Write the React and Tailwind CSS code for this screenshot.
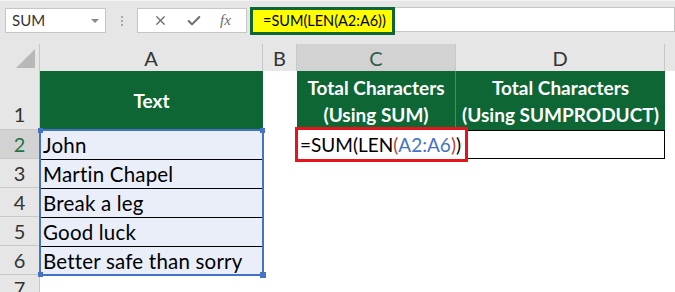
import React from "react";
import { X, Check } from "lucide-react";

const font = { fontFamily: "Lato, 'Open Sans', sans-serif" };

const rows = ["John", "Martin Chapel", "Break a leg", "Good luck", "Better safe than sorry"];

function RowHead({ n, active }) {
  return (
    <div
      className={`flex items-center justify-center border-b border-r border-[#c8c8c8] text-[20px] leading-none ${
        active ? "bg-[#d2d2d2] text-[#217346]" : "bg-[#e6e6e6] text-[#333]"
      }`}
    >
      {n}
    </div>
  );
}

export default function App() {
  return (
    <div className="w-[675px] h-[292px] overflow-hidden bg-white text-black" style={font}>
      {/* FORMULA BAR */}
      <div className="h-[44px] bg-[#e6e6e6] border-t border-[#f3f3f3] flex items-start pt-[7px] pl-[5px]">
        <div className="w-[101px] h-[25px] bg-white border border-[#c6c6c6] flex items-center justify-between pl-[6px] pr-[6px] text-[15px] text-[#333]">
          <span>SUM</span>
          <span className="w-0 h-0 border-l-[4px] border-r-[4px] border-t-[4px] border-l-transparent border-r-transparent border-t-[#8a8a8a]" />
        </div>
        <div className="w-[31px] h-[25px] flex flex-col items-center justify-center gap-[2px]">
          <span className="w-[2px] h-[2px] bg-[#a8a8a8]" />
          <span className="w-[2px] h-[2px] bg-[#a8a8a8]" />
          <span className="w-[2px] h-[2px] bg-[#a8a8a8]" />
        </div>
        <div className="w-[110px] h-[25px] bg-white border border-[#c6c6c6] flex items-center justify-around px-[6px]">
          <X size={15} strokeWidth={2} className="text-[#6b6b6b]" />
          <Check size={16} strokeWidth={3} className="text-[#6b6b6b]" />
          <span className="text-[15px] italic text-[#6b6b6b]" style={{ fontFamily: "'Liberation Serif', serif" }}>
            fx
          </span>
        </div>
        <div className="w-[3px]" />
        <div className="flex-1 h-[25px] bg-white border border-[#c6c6c6] flex items-start -mt-[1px]">
          <div className="h-[28px] -mt-[1px] -ml-[1px] w-[145px] bg-[#ffff00] border-[3px] border-[#0d6634] flex items-center pl-[10px] text-[14.5px]">
            =SUM(LEN(A2:A6))
          </div>
        </div>
      </div>

      {/* SHEET */}
      <div className="grid grid-cols-[40px_223px_34px_159px_209px_1fr] grid-rows-[27px_59px_29px_29px_29px_29px_29px_1fr] h-[248px] leading-none">
        {/* column headers */}
        <div className="bg-[#e6e6e6] border-r border-[#c8c8c8] flex items-end justify-end pr-[4px] pb-[3px]">
          <div className="w-[19px] h-[19px] bg-[#b8b8b8] [clip-path:polygon(100%_0,100%_100%,0_100%)]" />
        </div>
        <div className="bg-[#e6e6e6] border-r border-[#c8c8c8] flex items-center justify-center text-[20px] text-[#333]">A</div>
        <div className="bg-[#e6e6e6] border-r border-[#c8c8c8] flex items-center justify-center text-[20px] text-[#333]">B</div>
        <div className="bg-[#d2d2d2] border-r border-[#c8c8c8] flex items-center justify-center text-[20px] text-[#2f5e47]">C</div>
        <div className="bg-[#e6e6e6] border-r border-[#c8c8c8] flex items-center justify-center text-[20px] text-[#333]">D</div>
        <div className="bg-[#e6e6e6]" />

        {/* row 1 */}
        <div className="bg-[#e6e6e6] border-b border-r border-[#c8c8c8] flex items-end justify-center pb-[5px] text-[20px] text-[#333]">1</div>
        <div className="bg-[#0d6634] flex items-center justify-center text-white font-bold text-[19px]">Text</div>
        <div className="bg-white" />
        <div className="bg-[#0d6634] border-r border-[#4d8a66] flex flex-col items-center justify-center text-white font-bold text-[19px] leading-[27px]">
          <span>Total Characters</span>
          <span>(Using SUM)</span>
        </div>
        <div className="bg-[#0d6634] flex flex-col items-center justify-center text-white font-bold text-[19px] leading-[27px]">
          <span>Total Characters</span>
          <span>(Using SUMPRODUCT)</span>
        </div>
        <div />

        {/* row headers 2-6 */}
        {[2, 3, 4, 5, 6].map((n, i) => (
          <div key={n} style={{ gridColumn: 1, gridRow: i + 3 }} className="grid">
            <RowHead n={n} active={n === 2} />
          </div>
        ))}

        {/* A2:A6 selection */}
        <div
          style={{ gridColumn: 2, gridRow: "3 / 8" }}
          className="relative bg-[#e9eef8] flex flex-col -m-[1px] border-2 border-[#4472c4] min-h-0"
        >
          {rows.map((t, i) => (
            <div
              key={t}
              className={`h-[29px] shrink-0 flex items-center pl-[2px] text-[20.5px] leading-none tracking-[0.2px] ${
                i < 4 ? "border-b border-black" : ""
              }`}
            >
              {t}
            </div>
          ))}
          <span className="absolute -left-[3px] -top-[3px] w-[5px] h-[5px] bg-[#4472c4]" />
          <span className="absolute -right-[3px] -top-[3px] w-[5px] h-[5px] bg-[#4472c4]" />
          <span className="absolute -left-[3px] -bottom-[3px] w-[5px] h-[5px] bg-[#4472c4]" />
          <span className="absolute -right-[4px] -bottom-[4px] w-[6px] h-[6px] bg-[#4472c4]" />
        </div>

        {/* C2 */}
        <div style={{ gridColumn: 4, gridRow: 3 }} className="relative">
          <div className="absolute -left-[2px] -top-[3px] w-[173px] h-[35px] border-[3px] border-[#e8141b] bg-white flex items-center pl-[2px] text-[19px] z-10 whitespace-nowrap">
            =SUM(LEN<span className="text-[#b0463a]">(</span>
            <span className="text-[#4472c4]">A2:A6</span>
            <span className="text-[#b0463a]">)</span>)
          </div>
        </div>
        {/* D2 */}
        <div style={{ gridColumn: 5, gridRow: 3 }} className="border border-black" />

        {/* row 7 header */}
        <div style={{ gridColumn: 1, gridRow: 8 }} className="bg-[#e6e6e6] border-r border-[#c8c8c8] flex justify-center text-[20px] text-[#333] pt-[3px]">
          7
        </div>
      </div>
    </div>
  );
}
